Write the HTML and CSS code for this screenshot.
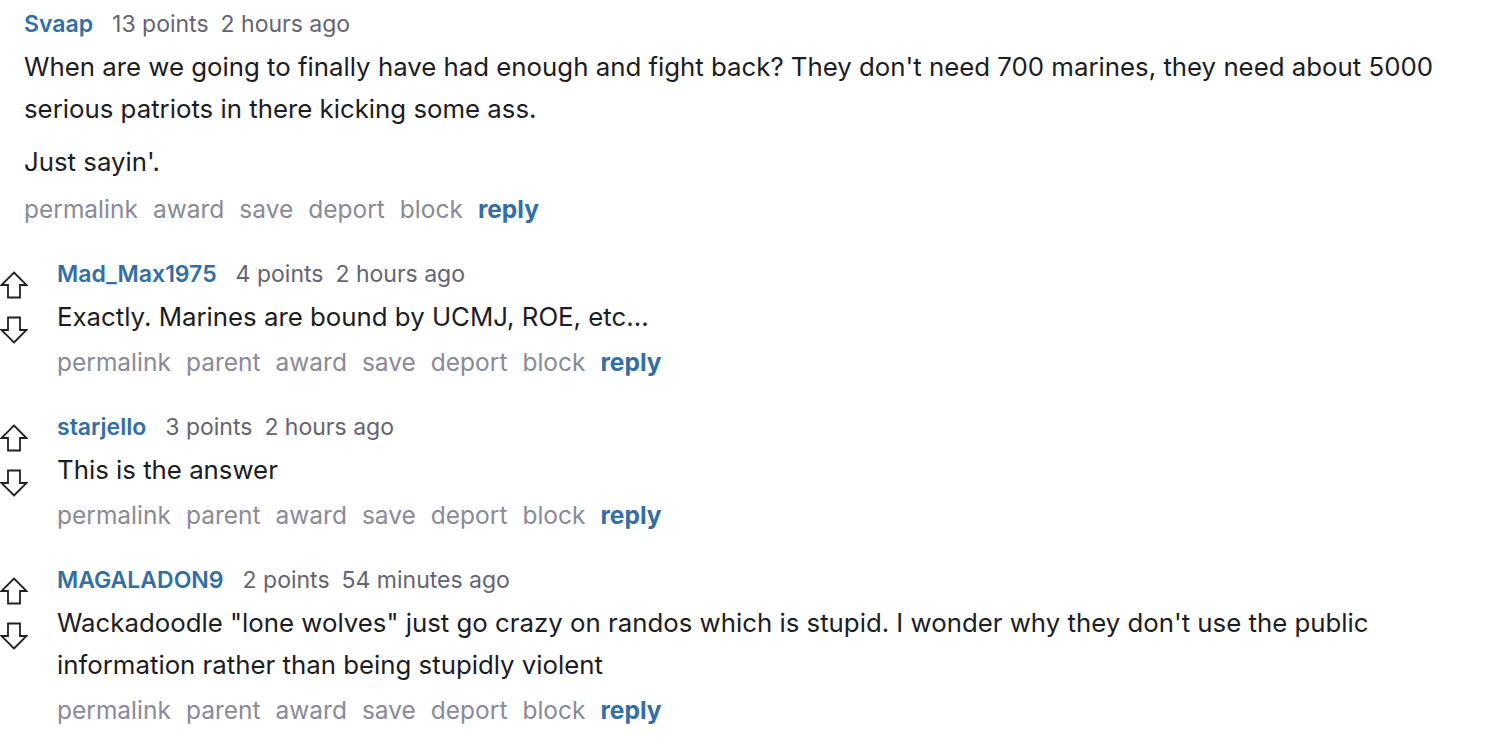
FILE: index.html
```html
<!DOCTYPE html>
<html lang="en">
  <head>
    <meta charset="UTF-8" />
    <title>Comments</title>
    <link rel="stylesheet" href="styles.css">
  </head>
  <body>
    <div class="comment top">
      <div class="content">
        <div class="meta">
          <a class="author" href="#">Svaap</a>
          <span>13 points</span>
          <span>2 hours ago</span>
        </div>
        <div class="body">
          <p>When are we going to finally have had enough and fight back? They don't need 700 marines, they need about 5000 serious patriots in there kicking some ass.</p>
          <p>Just sayin'.</p>
        </div>
        <div class="actions">
          <a href="#">permalink</a>
          <a href="#">award</a>
          <a href="#">save</a>
          <a href="#">deport</a>
          <a href="#">block</a>
          <a class="reply" href="#">reply</a>
        </div>
      </div>
    </div>

    <div class="comment child">
      <div class="votes">
        <svg viewBox="0 0 28 28"><path d="M14 1.5 L26.5 14 L20 14 L20 26.5 L8 26.5 L8 14 L1.5 14 Z"/></svg>
        <svg viewBox="0 0 28 28"><path d="M14 26.5 L26.5 14 L20 14 L20 1.5 L8 1.5 L8 14 L1.5 14 Z"/></svg>
      </div>
      <div class="content">
        <div class="meta">
          <a class="author" href="#">Mad_Max1975</a>
          <span>4 points</span>
          <span>2 hours ago</span>
        </div>
        <div class="body">
          <p>Exactly. Marines are bound by UCMJ, ROE, etc...</p>
        </div>
        <div class="actions">
          <a href="#">permalink</a>
          <a href="#">parent</a>
          <a href="#">award</a>
          <a href="#">save</a>
          <a href="#">deport</a>
          <a href="#">block</a>
          <a class="reply" href="#">reply</a>
        </div>
      </div>
    </div>

    <div class="comment child">
      <div class="votes">
        <svg viewBox="0 0 28 28"><path d="M14 1.5 L26.5 14 L20 14 L20 26.5 L8 26.5 L8 14 L1.5 14 Z"/></svg>
        <svg viewBox="0 0 28 28"><path d="M14 26.5 L26.5 14 L20 14 L20 1.5 L8 1.5 L8 14 L1.5 14 Z"/></svg>
      </div>
      <div class="content">
        <div class="meta">
          <a class="author" href="#">starjello</a>
          <span>3 points</span>
          <span>2 hours ago</span>
        </div>
        <div class="body">
          <p>This is the answer</p>
        </div>
        <div class="actions">
          <a href="#">permalink</a>
          <a href="#">parent</a>
          <a href="#">award</a>
          <a href="#">save</a>
          <a href="#">deport</a>
          <a href="#">block</a>
          <a class="reply" href="#">reply</a>
        </div>
      </div>
    </div>

    <div class="comment child">
      <div class="votes">
        <svg viewBox="0 0 28 28"><path d="M14 1.5 L26.5 14 L20 14 L20 26.5 L8 26.5 L8 14 L1.5 14 Z"/></svg>
        <svg viewBox="0 0 28 28"><path d="M14 26.5 L26.5 14 L20 14 L20 1.5 L8 1.5 L8 14 L1.5 14 Z"/></svg>
      </div>
      <div class="content">
        <div class="meta">
          <a class="author" href="#">MAGALADON9</a>
          <span>2 points</span>
          <span>54 minutes ago</span>
        </div>
        <div class="body">
          <p>Wackadoodle "lone wolves" just go crazy on randos which is stupid. I wonder why they don't use the public information rather than being stupidly violent</p>
        </div>
        <div class="actions">
          <a href="#">permalink</a>
          <a href="#">parent</a>
          <a href="#">award</a>
          <a href="#">save</a>
          <a href="#">deport</a>
          <a href="#">block</a>
          <a class="reply" href="#">reply</a>
        </div>
      </div>
    </div>
  </body>
</html>
```

FILE: styles.css
```css
body {
  margin: 0;
  padding: 8px 0 0 0;
  font-family: Inter, "Noto Sans", Arial, sans-serif;
  background: #fff;
  color: #1c1c24;
}
a {
  text-decoration: none;
}
.comment {
  display: flex;
  margin-bottom: 33px;
}
.comment.top .content {
  padding-left: 24px;
}
.comment.top .actions {
  margin-top: -1px;
}
.votes {
  width: 57px;
  display: flex;
  flex-direction: column;
  gap: 17px;
  padding-top: 13px;
}
.votes svg {
  width: 28px;
  height: 28px;
  fill: none;
  stroke: #222;
  stroke-width: 1.8;
  stroke-linejoin: miter;
}
.content {
  flex: 1;
  padding-right: 40px;
}
.meta {
  font-size: 23px;
  line-height: 32px;
  color: #646473;
  display: flex;
  gap: 12px;
}
.meta .author {
  color: #336ea6;
  font-weight: 600;
  margin-right: 7px;
}
.body {
  font-size: 25.8px;
  line-height: 42px;
  margin-top: 6px;
}
.body p {
  margin: 0 0 11px 0;
}
.actions {
  font-size: 24.5px;
  line-height: 32px;
  display: flex;
  gap: 15px;
  margin-top: -3px;
}
.actions a {
  color: #8a8a99;
}
.actions .reply {
  color: #336ea6;
  font-weight: 700;
}
```
